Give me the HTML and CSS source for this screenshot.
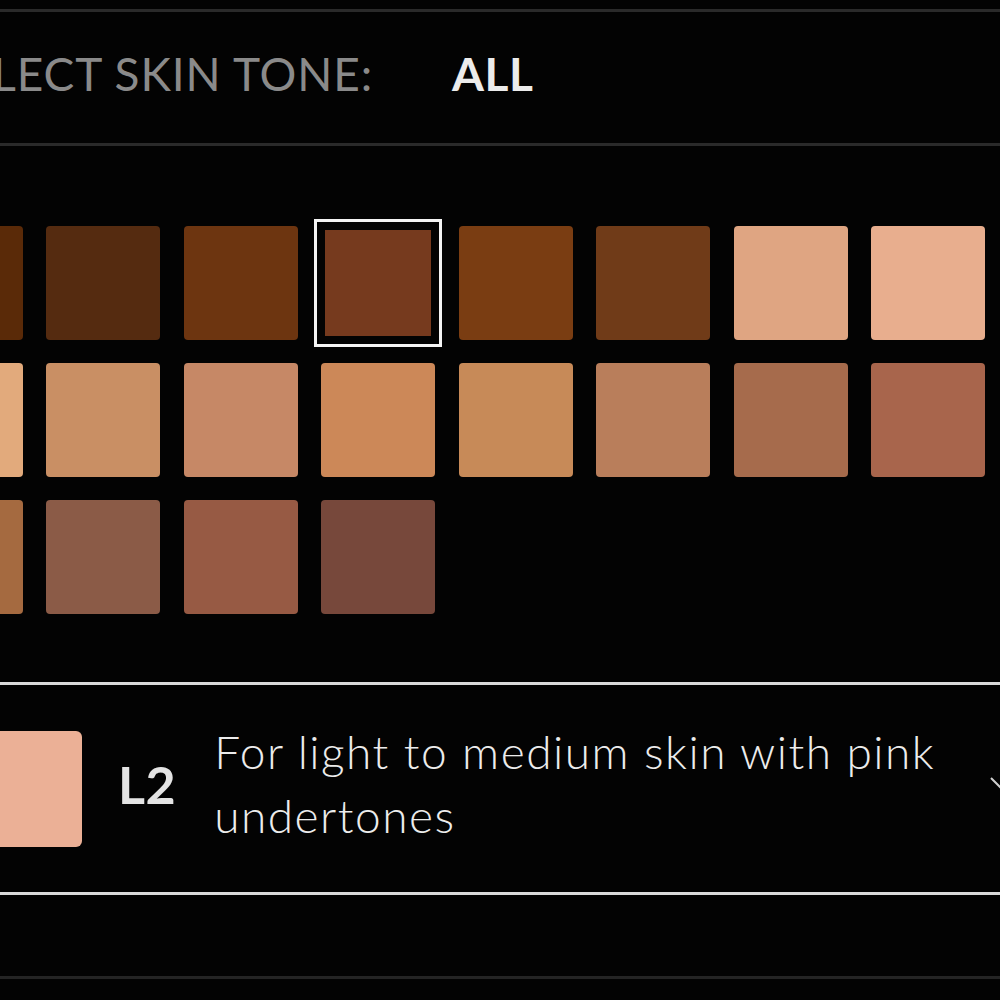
FILE: index.html
```html
<!DOCTYPE html>
<html lang="en">
<head>
<meta charset="utf-8">
<title>Select skin tone</title>
<link rel="stylesheet" href="styles.css">
</head>
<body>
<div class="page">
  <div class="rule rule-dark rule-top"></div>
  <header class="tone-header">
    <span class="tone-label">SELECT SKIN TONE:</span>
    <span class="tone-value">ALL</span>
  </header>
  <div class="rule rule-dark"></div>

  <div class="swatch-grid">
    <div class="swatch" style="background:#5a2a08"></div>
    <div class="swatch" style="background:#552b10"></div>
    <div class="swatch" style="background:#6d3510"></div>
    <div class="swatch selected" style="background:#763a1e"></div>
    <div class="swatch" style="background:#7a3d12"></div>
    <div class="swatch" style="background:#703b18"></div>
    <div class="swatch" style="background:#dfa582"></div>
    <div class="swatch" style="background:#e8ae8e"></div>

    <div class="swatch" style="background:#e2aa7c"></div>
    <div class="swatch" style="background:#c98f64"></div>
    <div class="swatch" style="background:#c68866"></div>
    <div class="swatch" style="background:#cc8858"></div>
    <div class="swatch" style="background:#c78a58"></div>
    <div class="swatch" style="background:#b97e5b"></div>
    <div class="swatch" style="background:#a66b4c"></div>
    <div class="swatch" style="background:#a8654c"></div>

    <div class="swatch" style="background:#a56a40"></div>
    <div class="swatch" style="background:#8b5b47"></div>
    <div class="swatch" style="background:#975a44"></div>
    <div class="swatch" style="background:#77483b"></div>
  </div>

  <div class="rule rule-light"></div>
  <div class="tone-detail">
    <div class="detail-swatch"></div>
    <span class="detail-code">L2</span>
    <p class="detail-text">For light to medium skin with pink undertones</p>
    <svg class="detail-chevron" width="26" height="15" viewBox="0 0 26 15" aria-hidden="true">
      <polyline points="1,1 13,13 25,1" fill="none" stroke="#cfcfcf" stroke-width="2"/>
    </svg>
  </div>
  <div class="rule rule-light"></div>
  <div class="rule rule-dark rule-bottom"></div>
</div>
</body>
</html>
```

FILE: styles.css
```css
html, body {
  margin: 0;
  padding: 0;
  background: #030303;
  overflow: hidden;
}

.page {
  width: 1000px;
  height: 1000px;
  font-family: Lato, "Noto Sans", "Liberation Sans", sans-serif;
  color: #e6e6e6;
  display: flex;
  flex-direction: column;
}

.rule {
  height: 3px;
  flex: none;
}
.rule-dark { background: #2a2a2a; }
.rule-light { background: #d9d9d9; }
.rule-top { margin-top: 9px; }
.rule-bottom { margin-top: 81px; background: #242424; }

.tone-header {
  height: 131px;
  display: flex;
  align-items: center;
  gap: 79px;
  margin-left: -61px;
  font-size: 46px;
  line-height: 1;
  padding-bottom: 8px;
  box-sizing: border-box;
}
.tone-label {
  color: #8a8a8a;
  font-weight: 400;
  letter-spacing: 0.9px;
}
.tone-value {
  color: #ececec;
  font-weight: 700;
  letter-spacing: 0.5px;
}

.swatch-grid {
  display: grid;
  grid-template-columns: repeat(8, 114px);
  grid-auto-rows: 114px;
  column-gap: 23.5px;
  row-gap: 23px;
  margin: 80px 0 68px -91.5px;
}

.swatch {
  border-radius: 4px;
}
.swatch.selected {
  border-radius: 0;
  box-shadow: inset 0 0 0 4px #030303;
  outline: 3px solid #f4f4f4;
  outline-offset: 4px;
}

.tone-detail {
  height: 207px;
  display: flex;
  align-items: center;
}
.detail-swatch {
  flex: none;
  width: 116px;
  height: 116px;
  margin-left: -34px;
  border-radius: 6px;
  background: #ebb096;
}
.detail-code {
  flex: none;
  margin: 0 0 10px 36px;
  font-size: 52px;
  font-weight: 700;
  color: #e4e4e4;
  letter-spacing: 0.5px;
}
.detail-text {
  margin: 0 0 10px 38px;
  width: 750px;
  font-size: 46px;
  line-height: 64px;
  font-weight: 300;
  letter-spacing: 1.5px;
  color: #ececec;
}
.detail-chevron {
  flex: none;
  margin-left: auto;
  margin-right: -16px;
  margin-bottom: 8px;
}
```
